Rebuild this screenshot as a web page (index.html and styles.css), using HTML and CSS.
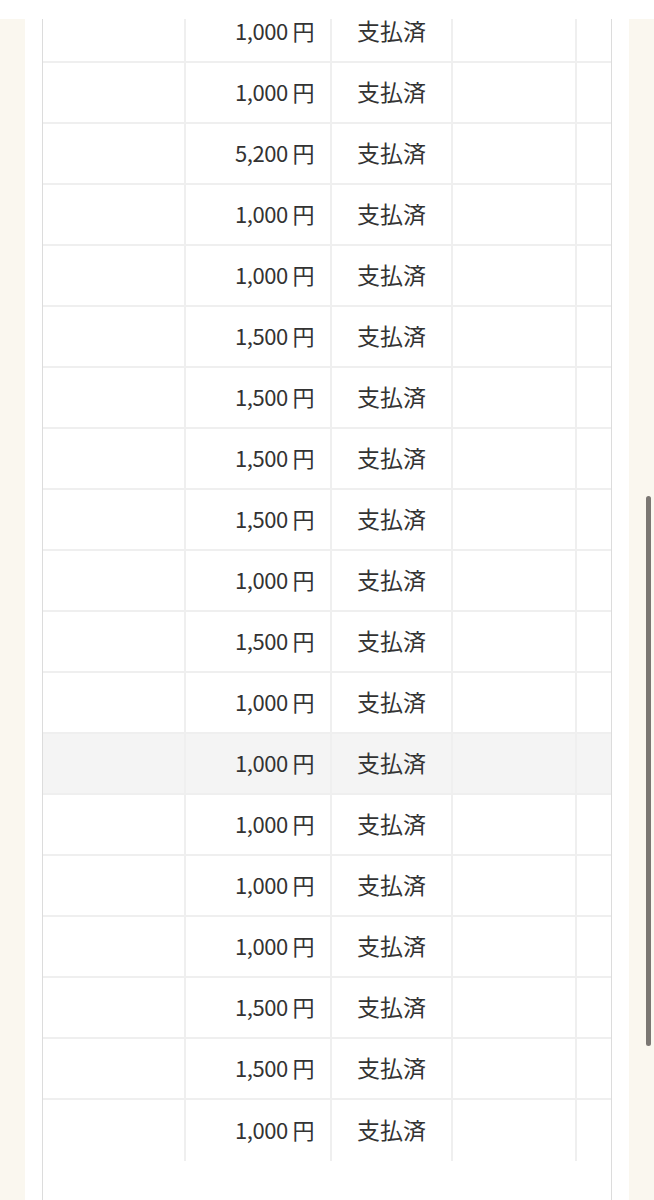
FILE: index.html
```html
<!DOCTYPE html>
<html lang="ja">
<head>
    <meta charset="UTF-8">
    <meta name="viewport" content="width=device-width, initial-scale=1.0">
    <title>支払履歴</title>
    <link rel="stylesheet" href="styles.css">
</head>
<body>
    <div class="topbar"></div>
    <div class="page">
        <div class="card">
            <div class="rows">
                <div class="row"><div class="cell"></div><div class="cell amount">1,000 円</div><div class="cell status">支払済</div><div class="cell"></div><div class="cell last"></div></div>
                <div class="row"><div class="cell"></div><div class="cell amount">1,000 円</div><div class="cell status">支払済</div><div class="cell"></div><div class="cell last"></div></div>
                <div class="row"><div class="cell"></div><div class="cell amount">5,200 円</div><div class="cell status">支払済</div><div class="cell"></div><div class="cell last"></div></div>
                <div class="row"><div class="cell"></div><div class="cell amount">1,000 円</div><div class="cell status">支払済</div><div class="cell"></div><div class="cell last"></div></div>
                <div class="row"><div class="cell"></div><div class="cell amount">1,000 円</div><div class="cell status">支払済</div><div class="cell"></div><div class="cell last"></div></div>
                <div class="row"><div class="cell"></div><div class="cell amount">1,500 円</div><div class="cell status">支払済</div><div class="cell"></div><div class="cell last"></div></div>
                <div class="row"><div class="cell"></div><div class="cell amount">1,500 円</div><div class="cell status">支払済</div><div class="cell"></div><div class="cell last"></div></div>
                <div class="row"><div class="cell"></div><div class="cell amount">1,500 円</div><div class="cell status">支払済</div><div class="cell"></div><div class="cell last"></div></div>
                <div class="row"><div class="cell"></div><div class="cell amount">1,500 円</div><div class="cell status">支払済</div><div class="cell"></div><div class="cell last"></div></div>
                <div class="row"><div class="cell"></div><div class="cell amount">1,000 円</div><div class="cell status">支払済</div><div class="cell"></div><div class="cell last"></div></div>
                <div class="row"><div class="cell"></div><div class="cell amount">1,500 円</div><div class="cell status">支払済</div><div class="cell"></div><div class="cell last"></div></div>
                <div class="row"><div class="cell"></div><div class="cell amount">1,000 円</div><div class="cell status">支払済</div><div class="cell"></div><div class="cell last"></div></div>
                <div class="row hover"><div class="cell"></div><div class="cell amount">1,000 円</div><div class="cell status">支払済</div><div class="cell"></div><div class="cell last"></div></div>
                <div class="row"><div class="cell"></div><div class="cell amount">1,000 円</div><div class="cell status">支払済</div><div class="cell"></div><div class="cell last"></div></div>
                <div class="row"><div class="cell"></div><div class="cell amount">1,000 円</div><div class="cell status">支払済</div><div class="cell"></div><div class="cell last"></div></div>
                <div class="row"><div class="cell"></div><div class="cell amount">1,000 円</div><div class="cell status">支払済</div><div class="cell"></div><div class="cell last"></div></div>
                <div class="row"><div class="cell"></div><div class="cell amount">1,500 円</div><div class="cell status">支払済</div><div class="cell"></div><div class="cell last"></div></div>
                <div class="row"><div class="cell"></div><div class="cell amount">1,500 円</div><div class="cell status">支払済</div><div class="cell"></div><div class="cell last"></div></div>
                <div class="row"><div class="cell"></div><div class="cell amount">1,000 円</div><div class="cell status">支払済</div><div class="cell"></div><div class="cell last"></div></div>
            </div>
        </div>
    </div>
    <div class="scrollbar"></div>
</body>
</html>
```

FILE: styles.css
```css
body {
    margin: 0;
    background: #faf7ef;
    font-family: "Noto Sans CJK JP", "Noto Sans", sans-serif;
    color: #333;
    height: 1200px;
    overflow: hidden;
}
.topbar {
    height: 19px;
    background: #fff;
}
.page {
    margin: 0 25px;
    padding: 0 17px;
    background: #fff;
    height: 1181px;
}
.card {
    height: 100%;
    overflow: hidden;
    border-left: 1px solid #dcdcdc;
    border-right: 1px solid #dcdcdc;
}
.rows {
    margin-top: -17px;
}
.row {
    display: grid;
    grid-template-columns: 143px 146px 121px 124px 1fr;
    height: 61px;
    box-sizing: border-box;
    border-bottom: 2px solid #efefef;
}
.row:last-child {
    border-bottom: none;
}
.row.hover {
    background: #f4f4f4;
}
.cell {
    display: flex;
    align-items: center;
    padding-bottom: 4px;
    box-sizing: border-box;
    border-right: 2px solid #efefef;
}
.cell.last {
    border-right: none;
}
.amount {
    justify-content: flex-end;
    padding-right: 16px;
    font-size: 22px;
    letter-spacing: -0.4px;
}
.status {
    justify-content: center;
    font-size: 23px;
}
.scrollbar {
    position: fixed;
    left: 646px;
    top: 496px;
    width: 5px;
    height: 550px;
    border-radius: 3px;
    background: #7b7773;
}
```
